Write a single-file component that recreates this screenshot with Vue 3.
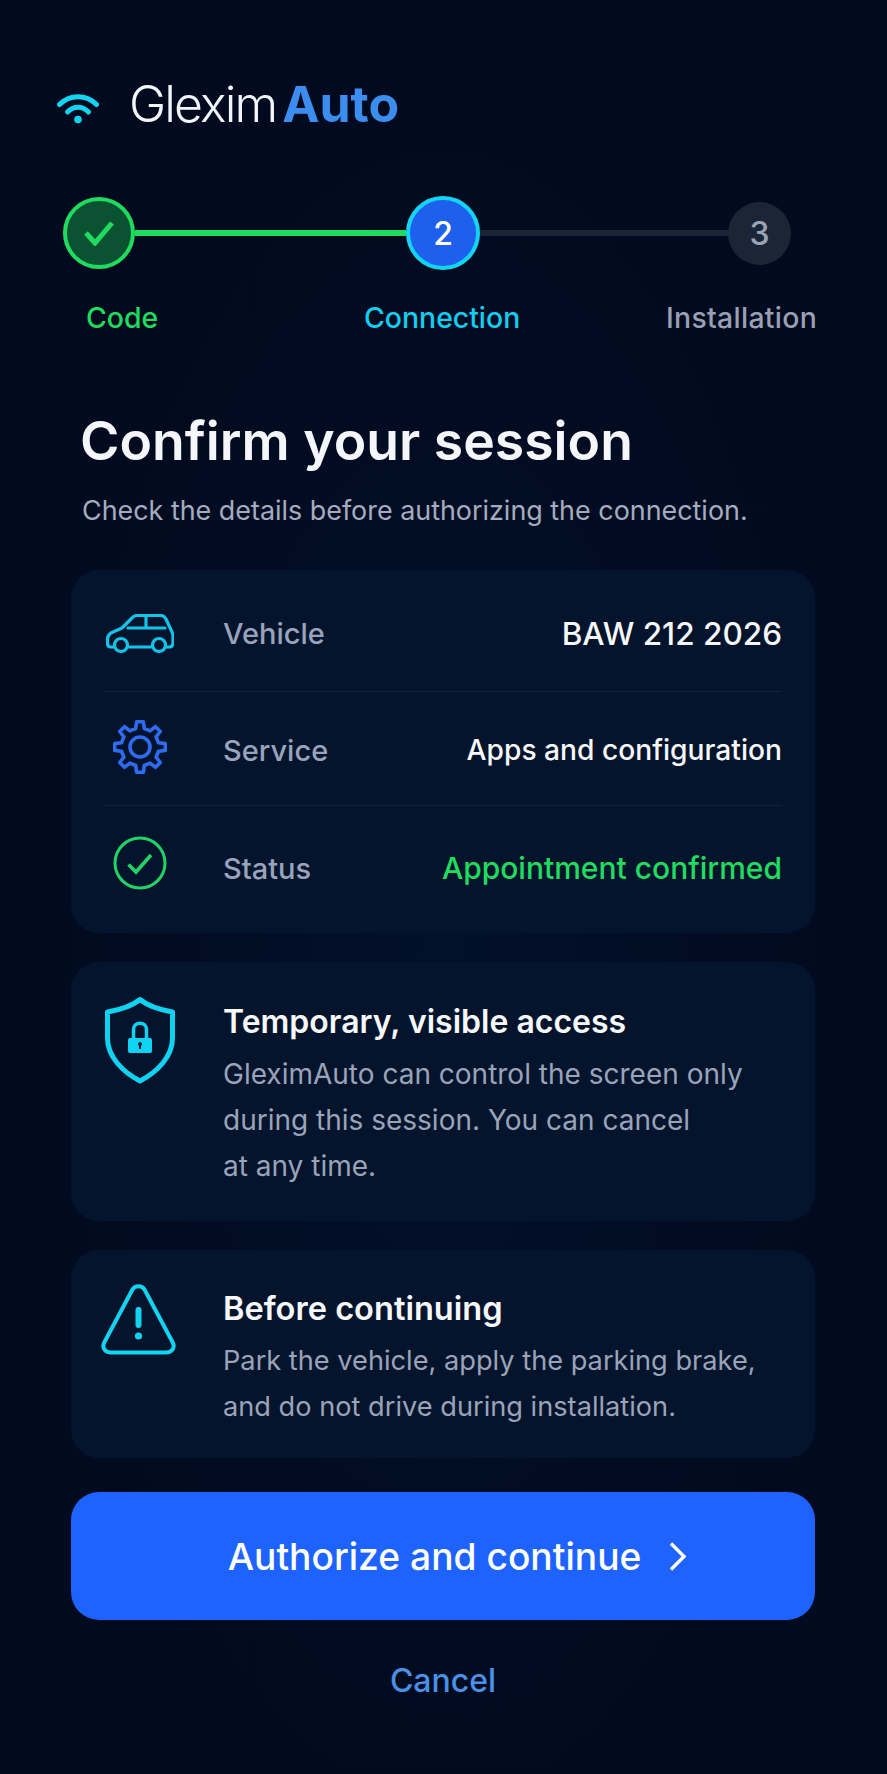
<template>
  <div class="screen">
    <header class="brand">
      <svg class="wifi" width="42" height="32" viewBox="0 0 42 32" fill="none">
        <path d="M2.5 12.5C12.5 2 29.5 2 39.5 12.5" stroke="#12d3f2" stroke-width="5" stroke-linecap="round" />
        <path d="M10.5 20C16.5 13.5 25.5 13.5 31.5 20" stroke="#12d3f2" stroke-width="5" stroke-linecap="round" />
        <circle cx="21" cy="27.5" r="3.8" fill="#12d3f2" />
      </svg>
      <div class="brand-name"><span class="glexim">Glexim</span><span class="auto">Auto</span></div>
    </header>

    <section class="stepper">
      <div class="step-track">
        <div class="dot dot-done">
          <svg width="32" height="26" viewBox="0 0 32 26" fill="none">
            <path d="M3 13L12 23L29 3" stroke="#1fdc5f" stroke-width="5" />
          </svg>
        </div>
        <div class="line line-done"></div>
        <div class="dot dot-active">2</div>
        <div class="line"></div>
        <div class="dot dot-next">3</div>
      </div>
      <div class="step-labels">
        <span class="lbl-done">Code</span>
        <span class="lbl-active">Connection</span>
        <span class="lbl-next">Installation</span>
      </div>
    </section>

    <h1>Confirm your session</h1>
    <p class="lead">Check the details before authorizing the connection.</p>

    <section class="card details">
      <div class="row">
        <div class="row-icon">
          <svg width="68" height="40" viewBox="0 0 68 40" fill="none" stroke="#12c4ea" stroke-width="3.2" stroke-linejoin="round" stroke-linecap="round">
            <path d="M8 33H4.5Q1.5 33 1.5 29V26Q1.5 20 7 18L16 14L26 4Q28 1.5 31 1.5H55Q58 1.5 60 5L66 18Q67 20 67 22V29Q67 33 63 33H60" />
            <path d="M22 33H46" />
            <path d="M22 14H59M40 2V14" />
            <circle cx="15" cy="31" r="6.5" />
            <circle cx="53" cy="31" r="6.5" />
          </svg>
        </div>
        <span class="row-label">Vehicle</span>
        <span class="row-value val-vehicle">BAW 212 2026</span>
      </div>
      <div class="row">
        <div class="row-icon icon-gear">
          <svg width="54" height="56" viewBox="-27 -28 54 56" fill="none" stroke="#2f6bf0" stroke-width="3.6" stroke-linejoin="round">
            <path :d="gearPath" />
            <circle r="10" />
          </svg>
        </div>
        <span class="row-label">Service</span>
        <span class="row-value">Apps and configuration</span>
      </div>
      <div class="row">
        <div class="row-icon icon-check">
          <svg width="54" height="54" viewBox="0 0 54 54" fill="none" stroke="#1fd365">
            <circle cx="27" cy="27" r="25" stroke-width="3" />
            <path d="M15.5 28.5L23 36L38 19" stroke-width="3.6" />
          </svg>
        </div>
        <span class="row-label">Status</span>
        <span class="row-value val-status">Appointment confirmed</span>
      </div>
    </section>

    <section class="card notice notice-access">
      <div class="notice-icon">
        <svg width="70" height="87" viewBox="0 0 70 87" fill="none">
          <path d="M35 2.5C27 9 14 13 2.5 15V41C2.5 60 18 75 35 84C52 75 67.5 60 67.5 41V15C56 13 43 9 35 2.5Z" stroke="#0fd3f0" stroke-width="5" stroke-linejoin="round" />
          <path d="M28.5 41V32.5C28.5 24 41.5 24 41.5 32.5V41" stroke="#0fd3f0" stroke-width="3.5" />
          <rect x="23" y="41" width="24" height="15" rx="2" fill="#0fd3f0" />
          <circle cx="35" cy="47" r="2" fill="#04203a" />
          <path d="M35 47V52" stroke="#04203a" stroke-width="2" />
        </svg>
      </div>
      <div class="notice-text">
        <h2>Temporary, visible access</h2>
        <p>GleximAuto can control the screen only<br />during this session. You can cancel<br />at any time.</p>
      </div>
    </section>

    <section class="card notice notice-warn">
      <div class="notice-icon">
        <svg width="75" height="71" viewBox="0 0 75 71" fill="none">
          <path d="M31.5 5.5C34 1 41 1 43.5 5.5L71.5 58C74.5 63.5 71 68.5 65 68.5H10C4 68.5 .5 63.5 3.5 58Z" stroke="#12d3f0" stroke-width="4" stroke-linejoin="round" />
          <path d="M37.5 26V41" stroke="#12d3f0" stroke-width="6" stroke-linecap="round" />
          <circle cx="37.5" cy="52" r="3.6" fill="#12d3f0" />
        </svg>
      </div>
      <div class="notice-text">
        <h2>Before continuing</h2>
        <p>Park the vehicle, apply the parking brake,<br />and do not drive during installation.</p>
      </div>
    </section>

    <button class="primary">
      <span>Authorize and continue</span>
      <svg width="19" height="31" viewBox="0 0 19 31" fill="none">
        <path d="M3 2.5L16 15.5L3 28.5" stroke="#fff" stroke-width="3.4" />
      </svg>
    </button>
    <button class="cancel">Cancel</button>
  </div>
</template>

<script setup>
// 8 tooth gear outline, drawn around 0,0
const teeth = 8;
const points = [];
for (let i = 0; i < teeth; i++) {
  const a = (i / teeth) * Math.PI * 2 - Math.PI / 2;
  const step = (Math.PI * 2) / teeth;
  const add = (r, off) => {
    points.push(`${(r * Math.cos(a + off * step)).toFixed(1)} ${(r * Math.sin(a + off * step)).toFixed(1)}`);
  };
  add(25.5, -0.17);
  add(25.5, 0.17);
  add(19, 0.29);
  add(19, 0.71);
}
const gearPath = `M${points.join('L')}Z`;
</script>

<style>
html, body {
  margin: 0;
  background: #010a1e;
}
</style>

<style scoped>
.screen {
  box-sizing: border-box;
  width: 887px;
  height: 1774px;
  padding: 74px 72px 0 71px;
  font-family: Inter, "Liberation Sans", sans-serif;
  background: radial-gradient(ellipse at 50% 55%, #021029 0%, #010a1e 70%);
  color: #fff;
  overflow: hidden;
}

.brand {
  display: flex;
  align-items: center;
  height: 60px;
  margin-left: -14px;
}
.wifi {
  margin-top: 8px;
}
.brand-name {
  display: flex;
  gap: 6px;
  margin-left: 30px;
  font-size: 50px;
  line-height: 60px;
}
.glexim {
  font-weight: 300;
  letter-spacing: -1.9px;
  color: #f2f5fa;
}
.auto {
  font-weight: 700;
  color: #3b8df0;
}

.stepper {
  margin: 61px 0 0 -8px;
}
.step-track {
  display: flex;
  align-items: center;
  height: 76px;
  width: 728px;
}
.dot {
  box-sizing: border-box;
  flex: none;
  display: flex;
  align-items: center;
  justify-content: center;
  border-radius: 50%;
  font-size: 32px;
  font-weight: 500;
}
.dot-done {
  width: 72px;
  height: 72px;
  border: 4px solid #1fdc5f;
  background: #0b5232;
}
.dot-active {
  width: 74px;
  height: 74px;
  border: 4px solid #14d4f4;
  background: #1f5fee;
}
.dot-next {
  width: 63px;
  height: 63px;
  background: #1c2536;
  color: #9aa3b8;
}
.line {
  flex: 1;
  height: 6px;
  background: #1c2536;
}
.line-done {
  flex: none;
  width: 271px;
  background: #1fdc5f;
}
.step-labels {
  display: grid;
  grid-template-columns: 278px 302px 1fr;
  margin: 30px 0 0 23px;
  font-size: 28.4px;
  font-weight: 500;
  line-height: 34px;
  white-space: nowrap;
}
.lbl-done { color: #1fdc5f; }
.lbl-active { color: #14cdf0; }
.lbl-next {
  color: #9aa0b4;
  letter-spacing: .3px;
}

h1 {
  margin: 74px 0 0 9px;
  font-size: 53.5px;
  font-weight: 600;
  line-height: 64px;
  color: #f4f6fa;
}
.lead {
  margin: 19px 0 0 11px;
  font-size: 26.9px;
  line-height: 36px;
  color: #a5acbf;
  white-space: nowrap;
}

.card {
  box-sizing: border-box;
  width: 744px;
  border-radius: 28px;
  background: #04142c;
}
.details {
  margin-top: 42px;
  padding: 6px 33px;
  height: 363px;
}
.row {
  box-sizing: border-box;
  display: flex;
  align-items: center;
  height: 116px;
  border-bottom: 1px solid #12223c;
}
.row:nth-child(2) {
  height: 114px;
  padding-top: 3px;
}
.row:last-child {
  height: 124px;
  border-bottom: 0;
}
.row-icon {
  display: flex;
  justify-content: center;
  width: 68px;
  flex: none;
  margin-left: 2px;
}
.icon-gear {
  margin-bottom: 7px;
}
.icon-check {
  margin-bottom: 10px;
}
.row-label {
  margin-left: 49px;
  font-size: 29px;
  font-weight: 500;
  color: #9aa3bc;
}
.row-value {
  margin-left: auto;
  font-size: 28.2px;
  font-weight: 500;
  color: #f6f8fb;
  white-space: nowrap;
}
.val-vehicle {
  font-size: 31.5px;
}
.val-status {
  font-size: 30px;
  color: #1fdc5f;
}

.notice {
  display: flex;
  margin-top: 29px;
  padding-left: 33px;
}
.notice-access {
  height: 259px;
  padding-top: 35px;
}
.notice-warn {
  height: 208px;
  padding-top: 34px;
  padding-left: 30px;
}
.notice-icon {
  flex: none;
  width: 70px;
}
.notice-access .notice-icon {
  margin-left: 1px;
  margin-right: -1px;
}
.notice-warn .notice-icon {
  margin-right: 3px;
}
.notice-text {
  margin-left: 49px;
  margin-top: 5px;
}
.notice-warn .notice-text {
  margin-top: 4px;
}
h2 {
  margin: 0;
  font-size: 32px;
  font-weight: 600;
  line-height: 40px;
  color: #f6f8fb;
  white-space: nowrap;
}
.notice-warn h2 {
  font-size: 32.6px;
}
.notice-text p {
  margin: 9px 0 0;
  font-size: 28px;
  line-height: 46px;
  color: #9aa3b8;
  white-space: nowrap;
}
.notice-warn p {
  margin-top: 10px;
  font-size: 27.2px;
}

.primary {
  display: flex;
  align-items: center;
  justify-content: center;
  gap: 27px;
  width: 744px;
  height: 128px;
  margin-top: 34px;
  padding: 0 0 0 29px;
  border: 0;
  border-radius: 28px;
  background: #1e63ff;
  color: #fff;
  font-family: inherit;
  font-size: 37.2px;
  font-weight: 500;
}
.cancel {
  display: block;
  width: 744px;
  margin-top: 40px;
  padding: 0;
  border: 0;
  background: none;
  color: #4a90e6;
  font-family: inherit;
  font-size: 32px;
  font-weight: 500;
  line-height: 42px;
  text-align: center;
}
</style>
